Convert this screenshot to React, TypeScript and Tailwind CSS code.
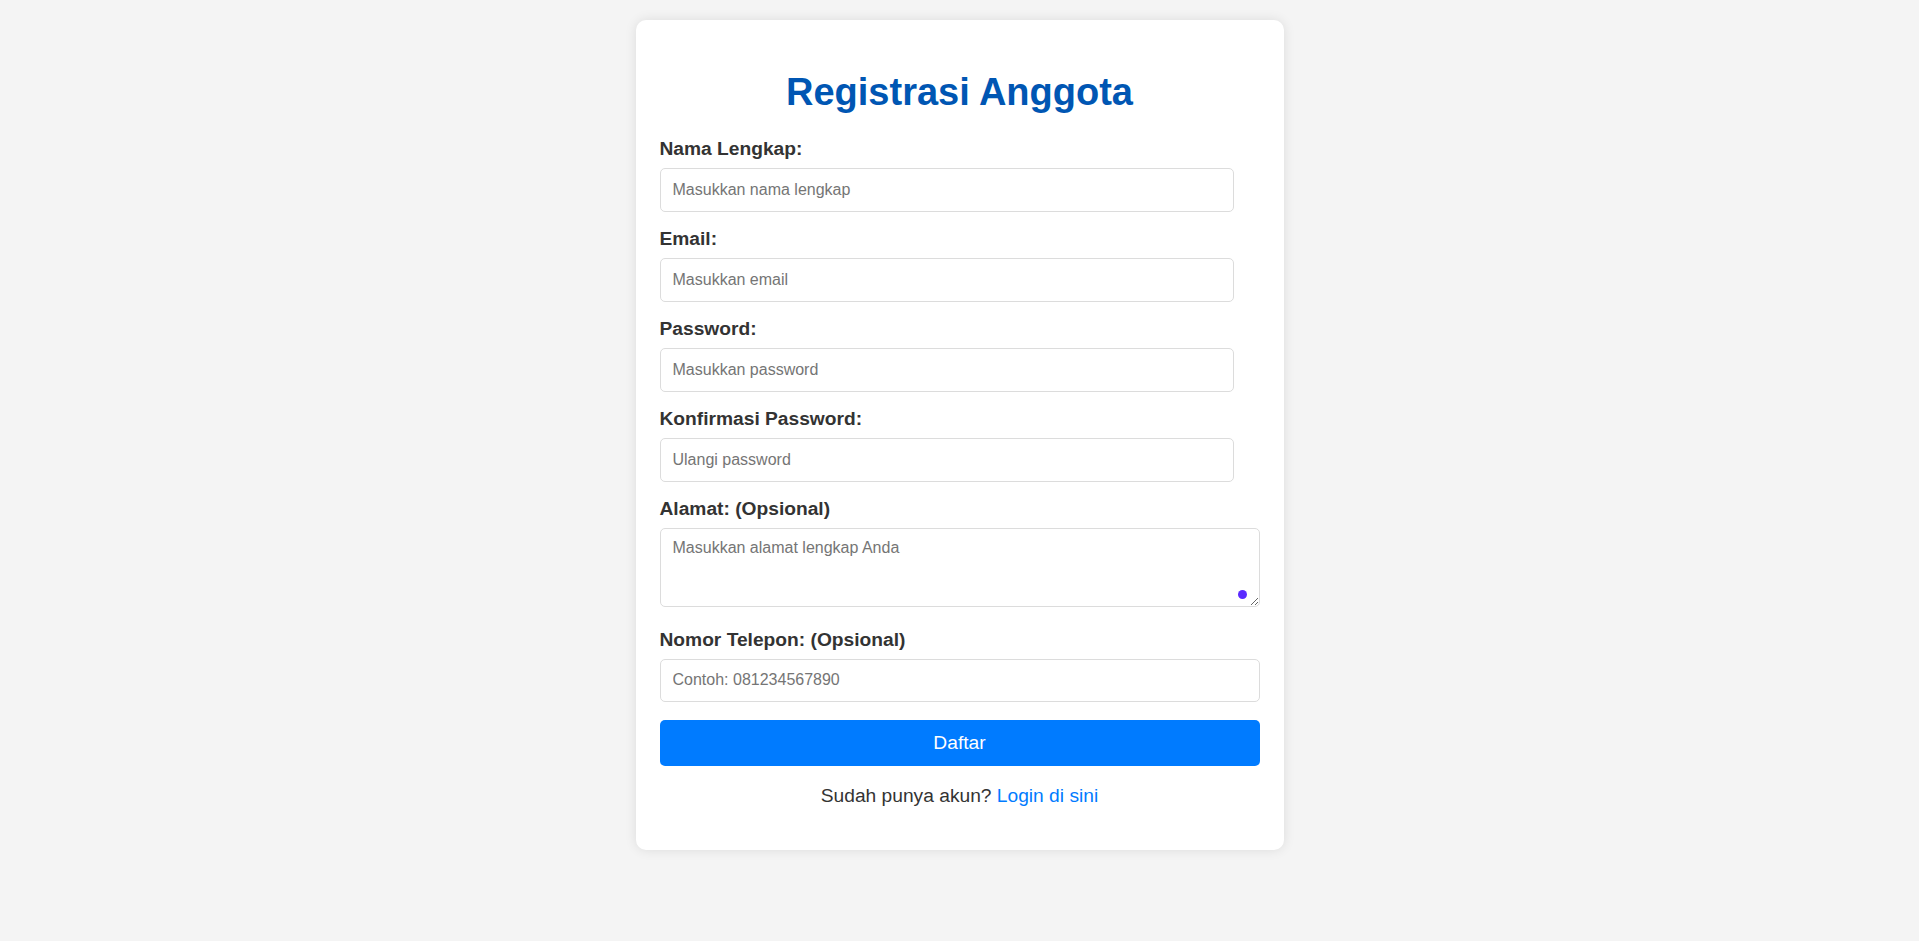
const fields = [
  { id: 'nama', label: 'Nama Lengkap:', type: 'text', placeholder: 'Masukkan nama lengkap' },
  { id: 'email', label: 'Email:', type: 'email', placeholder: 'Masukkan email' },
  { id: 'password', label: 'Password:', type: 'password', placeholder: 'Masukkan password' },
  { id: 'konfirmasi', label: 'Konfirmasi Password:', type: 'password', placeholder: 'Ulangi password' },
];

const labelClass = 'block text-[19.2px] leading-[22px] font-bold text-[#333] mb-[8px]';
const inputClass =
  'block h-[43.5px] px-[12px] border border-[#dcdcdc] rounded-[5px] bg-white text-[16px] text-[#333] placeholder:text-[#757575] outline-none';

export default function App() {
  return (
    <div className="min-h-screen bg-[#f4f4f4] pt-[20px] font-['Liberation_Sans',Arial,sans-serif]">
      <div className="mx-auto w-[648px] bg-white rounded-[10px] shadow-[0_0_12px_rgba(0,0,0,0.1)] px-[24px] pt-[24px] pb-[24px]">
        <h2 className="mt-[26px] mb-[24px] text-center text-[38px] leading-[44px] font-bold text-[#0056b3]">
          Registrasi Anggota
        </h2>
        <form onSubmit={(e) => e.preventDefault()}>
          {fields.map((f) => (
            <div key={f.id} className="mb-[16.5px]">
              <label htmlFor={f.id} className={labelClass}>
                {f.label}
              </label>
              <input id={f.id} type={f.type} placeholder={f.placeholder} className={`${inputClass} w-[574px]`} />
            </div>
          ))}
          <div className="mb-[21.5px]">
            <label htmlFor="alamat" className={labelClass}>
              Alamat: (Opsional)
            </label>
            <div className="relative">
              <textarea
                id="alamat"
                placeholder="Masukkan alamat lengkap Anda"
                className="block w-full h-[79px] px-[12px] py-[10px] border border-[#dcdcdc] rounded-[5px] text-[16px] leading-[18px] text-[#333] placeholder:text-[#757575] outline-none"
              />
              <span className="absolute right-[13px] bottom-[8px] w-[9px] h-[9px] rounded-full bg-[#5b2bff]" />
            </div>
          </div>
          <div>
            <label htmlFor="telepon" className={labelClass}>
              Nomor Telepon: (Opsional)
            </label>
            <input id="telepon" type="tel" placeholder="Contoh: 081234567890" className={`${inputClass} w-full`} />
          </div>
          <button
            type="submit"
            className="mt-[18px] block w-full h-[46px] rounded-[5px] bg-[#007bff] text-white text-[19.2px]"
          >
            Daftar
          </button>
        </form>
        <p className="my-[19.2px] text-center text-[19.2px] leading-[22px] text-[#333]">
          Sudah punya akun? <a href="#" className="text-[#007bff]">Login di sini</a>
        </p>
      </div>
    </div>
  );
}
